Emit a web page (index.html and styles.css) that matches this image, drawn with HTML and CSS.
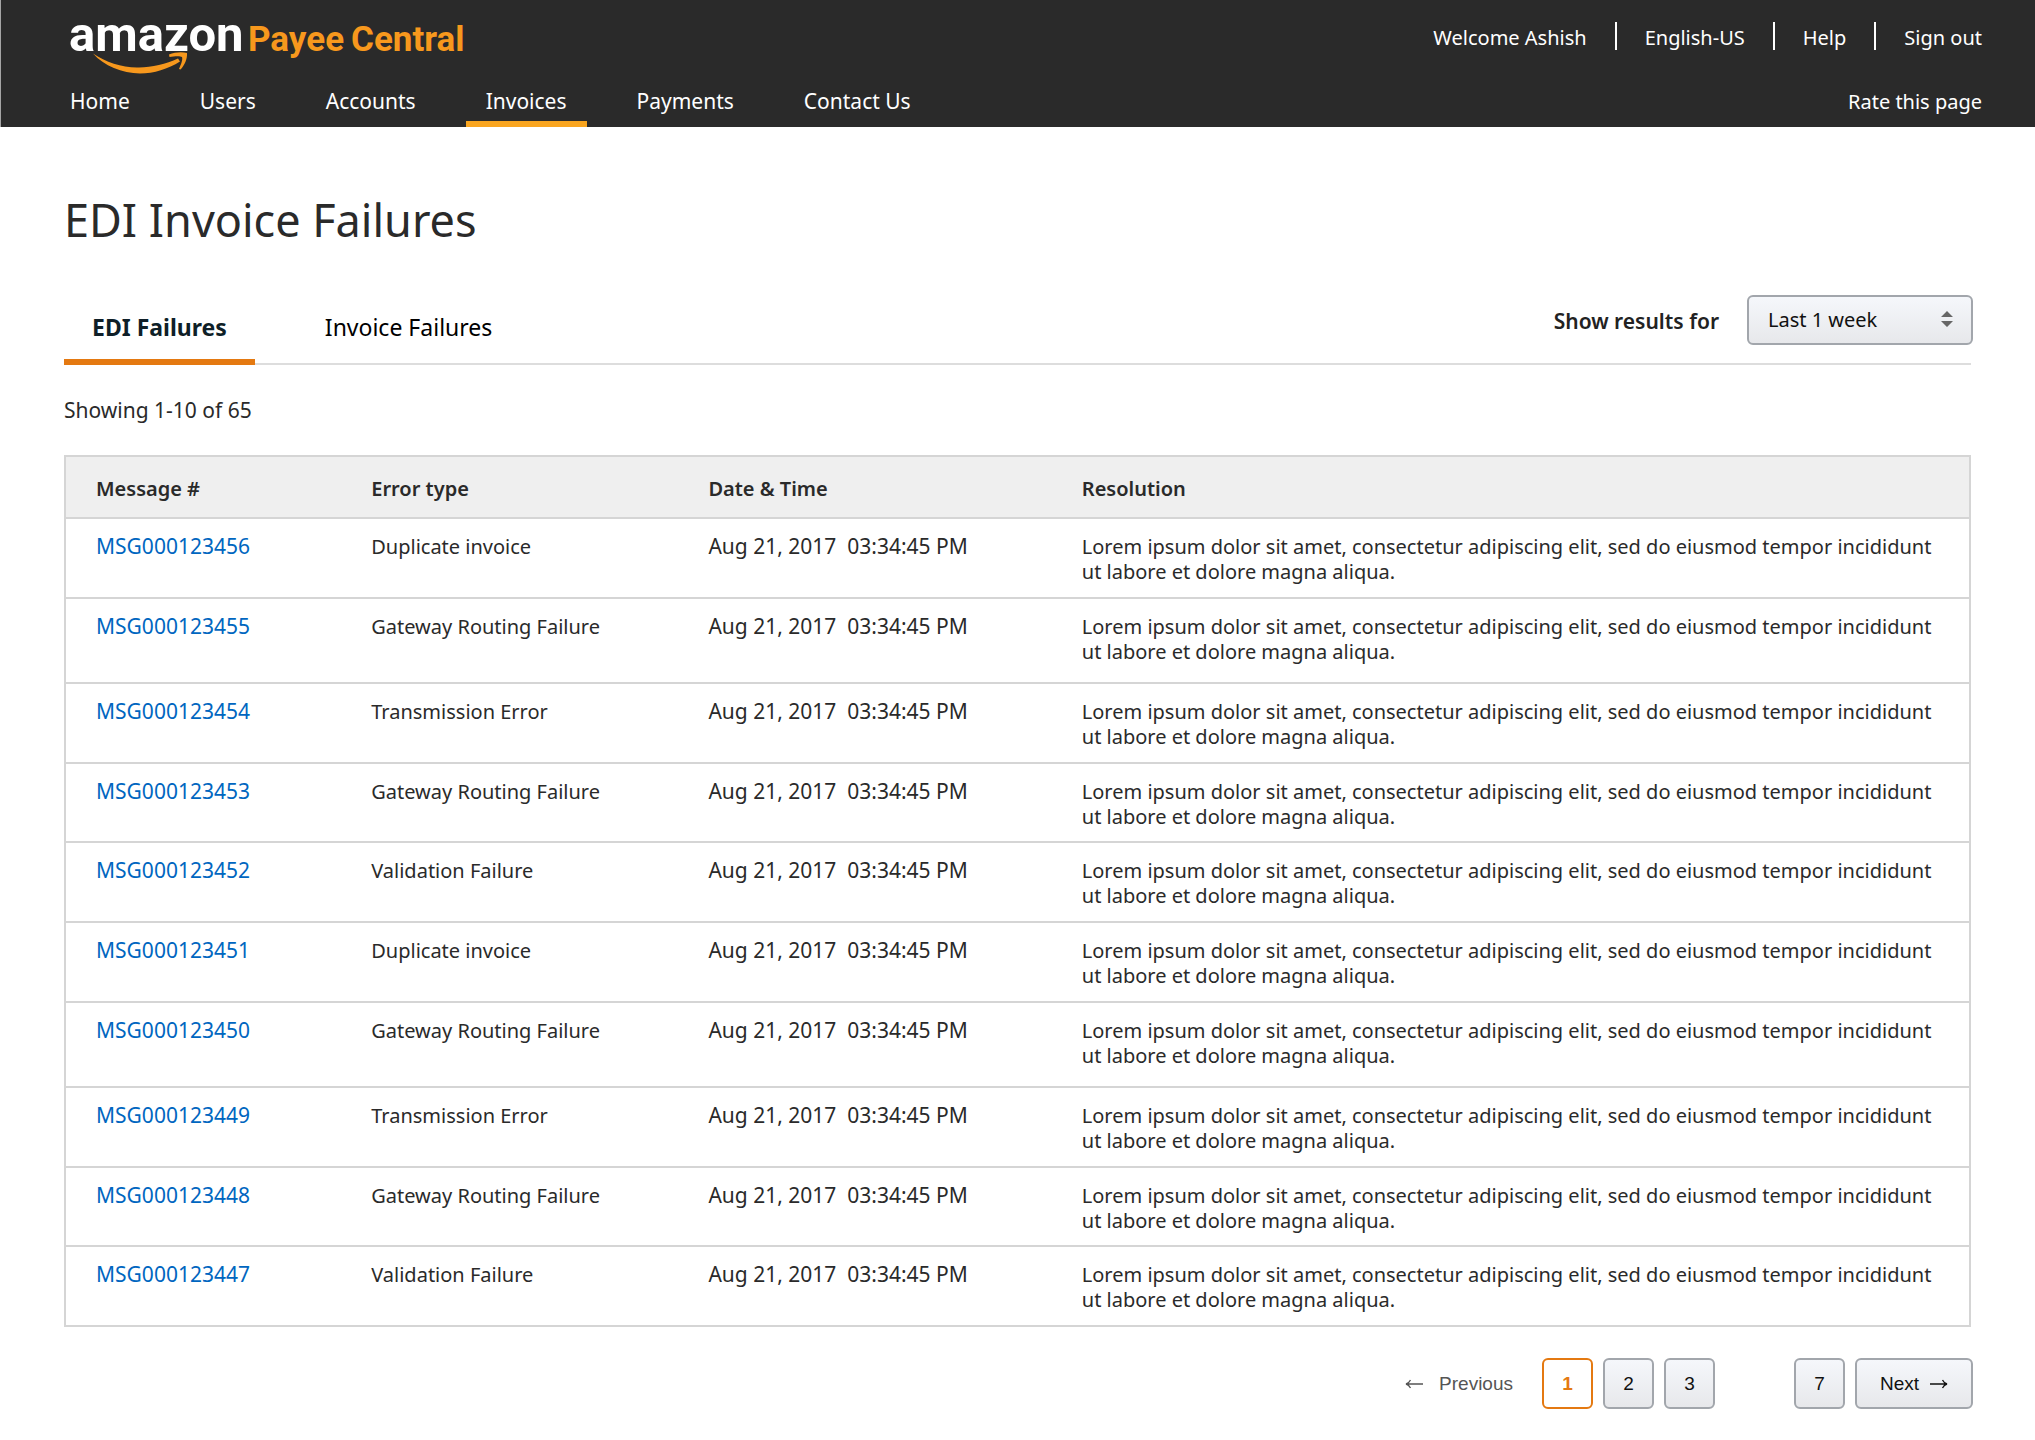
FILE: index.html
```html
<!DOCTYPE html>
<html lang="en">
<head>
<meta charset="utf-8">
<title>EDI Invoice Failures</title>
<link rel="stylesheet" href="styles.css">
</head>
<body>
<header class="header">
  <div class="header-row header-top">
    <a class="logo" href="#" aria-label="Amazon Payee Central">
      <svg width="404" height="60" viewBox="0 0 404 60">
        <text class="logo-amazon" x="-1" y="36">amazon</text>
        <text class="logo-payee" x="178" y="36">Payee</text>
        <text class="logo-payee" x="281" y="36">Central</text>
        <path fill="#f7981d" d="M23 38.500C36 47.500 53 53 69 52.500C82 52 96 49.500 108 43.500L110 46.500C98 54 84 58.500 70 58.500C52 58 34 51 23 38.500Z"/>
        <path fill="#f7981d" d="M99 39.500C105 37 112 36.500 117 38C117.500 44 114.500 50.500 110.500 54.500L109 54C111 49.500 113 44.500 112 42C109.500 40.500 103.500 41.500 99.500 42Z"/>
      </svg>
    </a>
    <ul class="account-links">
      <li>Welcome Ashish</li>
      <li><a href="#">English-US</a></li>
      <li><a href="#">Help</a></li>
      <li><a href="#">Sign out</a></li>
    </ul>
  </div>
  <div class="header-row">
    <nav class="main-nav">
      <a href="#">Home</a>
      <a href="#">Users</a>
      <a href="#">Accounts</a>
      <a href="#" class="current" aria-current="page">Invoices</a>
      <a href="#">Payments</a>
      <a href="#">Contact Us</a>
    </nav>
    <a class="rate" href="#">Rate this page</a>
  </div>
</header>
<main class="main">
  <h1>EDI Invoice Failures</h1>
  <div class="toolbar">
    <div class="tabs">
      <a href="#" class="tab tab-active">EDI Failures</a>
      <a href="#" class="tab">Invoice Failures</a>
    </div>
    <div class="filter">
      <label for="range">Show results for</label>
      <div class="select">
        <select id="range"><option>Last 1 week</option></select>
        <svg class="select-arrows" width="12" height="18" viewBox="0 0 12 18"><path fill="#666" d="M0 7L6 1L12 7ZM0 11H12L6 17Z"/></svg>
      </div>
    </div>
  </div>
  <p class="count">Showing 1-10 of 65</p>
  <table class="failures">
    <colgroup><col class="col-message"><col class="col-type"><col class="col-date"><col></colgroup>
    <thead>
      <tr><th>Message #</th><th>Error type</th><th>Date &amp; Time</th><th>Resolution</th></tr>
    </thead>
    <tbody>
      <tr><td class="id"><a href="#">MSG000123456</a></td><td>Duplicate invoice</td><td class="date">Aug 21, 2017&nbsp; 03:34:45 PM</td><td>Lorem ipsum dolor sit amet, consectetur adipiscing elit, sed do eiusmod tempor incididunt<br>ut labore et dolore magna aliqua.</td></tr>
      <tr class="tall"><td class="id"><a href="#">MSG000123455</a></td><td>Gateway Routing Failure</td><td class="date">Aug 21, 2017&nbsp; 03:34:45 PM</td><td>Lorem ipsum dolor sit amet, consectetur adipiscing elit, sed do eiusmod tempor incididunt<br>ut labore et dolore magna aliqua.</td></tr>
      <tr><td class="id"><a href="#">MSG000123454</a></td><td>Transmission Error</td><td class="date">Aug 21, 2017&nbsp; 03:34:45 PM</td><td>Lorem ipsum dolor sit amet, consectetur adipiscing elit, sed do eiusmod tempor incididunt<br>ut labore et dolore magna aliqua.</td></tr>
      <tr class="short"><td class="id"><a href="#">MSG000123453</a></td><td>Gateway Routing Failure</td><td class="date">Aug 21, 2017&nbsp; 03:34:45 PM</td><td>Lorem ipsum dolor sit amet, consectetur adipiscing elit, sed do eiusmod tempor incididunt<br>ut labore et dolore magna aliqua.</td></tr>
      <tr><td class="id"><a href="#">MSG000123452</a></td><td>Validation Failure</td><td class="date">Aug 21, 2017&nbsp; 03:34:45 PM</td><td>Lorem ipsum dolor sit amet, consectetur adipiscing elit, sed do eiusmod tempor incididunt<br>ut labore et dolore magna aliqua.</td></tr>
      <tr><td class="id"><a href="#">MSG000123451</a></td><td>Duplicate invoice</td><td class="date">Aug 21, 2017&nbsp; 03:34:45 PM</td><td>Lorem ipsum dolor sit amet, consectetur adipiscing elit, sed do eiusmod tempor incididunt<br>ut labore et dolore magna aliqua.</td></tr>
      <tr class="tall"><td class="id"><a href="#">MSG000123450</a></td><td>Gateway Routing Failure</td><td class="date">Aug 21, 2017&nbsp; 03:34:45 PM</td><td>Lorem ipsum dolor sit amet, consectetur adipiscing elit, sed do eiusmod tempor incididunt<br>ut labore et dolore magna aliqua.</td></tr>
      <tr><td class="id"><a href="#">MSG000123449</a></td><td>Transmission Error</td><td class="date">Aug 21, 2017&nbsp; 03:34:45 PM</td><td>Lorem ipsum dolor sit amet, consectetur adipiscing elit, sed do eiusmod tempor incididunt<br>ut labore et dolore magna aliqua.</td></tr>
      <tr class="short"><td class="id"><a href="#">MSG000123448</a></td><td>Gateway Routing Failure</td><td class="date">Aug 21, 2017&nbsp; 03:34:45 PM</td><td>Lorem ipsum dolor sit amet, consectetur adipiscing elit, sed do eiusmod tempor incididunt<br>ut labore et dolore magna aliqua.</td></tr>
      <tr><td class="id"><a href="#">MSG000123447</a></td><td>Validation Failure</td><td class="date">Aug 21, 2017&nbsp; 03:34:45 PM</td><td>Lorem ipsum dolor sit amet, consectetur adipiscing elit, sed do eiusmod tempor incididunt<br>ut labore et dolore magna aliqua.</td></tr>
    </tbody>
  </table>
  <nav class="pagination" aria-label="Pages">
    <button class="page-prev" type="button" disabled>
      <svg width="18" height="10" viewBox="0 0 18 10"><path fill="none" stroke="#555" stroke-width="1.300" d="M18 5H1.500M5.500 1C4.500 3 3 4.500 1 5C3 5.500 4.500 7 5.500 9"/></svg>
      Previous
    </button>
    <button class="page page-current" type="button" aria-current="page">1</button>
    <button class="page" type="button">2</button>
    <button class="page" type="button">3</button>
    <button class="page page-last" type="button">7</button>
    <button class="page page-next" type="button">
      Next
      <svg width="18" height="10" viewBox="0 0 18 10"><path fill="none" stroke="#111" stroke-width="1.300" d="M0 5H16.500M12.500 1C13.500 3 15 4.500 17 5C15 5.500 13.500 7 12.500 9"/></svg>
    </button>
  </nav>
</main>
</body>
</html>
```
FILE: styles.css
```css
* { box-sizing: border-box; }

body {
  margin: 0;
  background: #fff;
  color: #2a2a2a;
  font: 20px/25px "Noto Sans", sans-serif;
}

a { color: inherit; text-decoration: none; }

/* Header */
.header {
  background: #2a2a2a;
  color: #fff;
  padding: 0 53px 0 69px;
  border-left: 1px solid #a5a5a5;
}
.header-row { display: flex; justify-content: space-between; }
.header-top { height: 77px; padding-top: 15px; }
.logo { display: block; height: 60px; }
.logo svg { display: block; overflow: visible; }
.logo-amazon { font: bold 49px Roboto, "Liberation Sans", sans-serif; fill: #fff; }
.logo-payee { font: bold 35px Roboto, "Liberation Sans", sans-serif; fill: #f7981d; }

.account-links {
  display: flex;
  height: 28px;
  margin: 7px 0 0;
  padding: 0;
  list-style: none;
}
.account-links li { padding: 3px 0 0 28px; line-height: 25px; }
.account-links li + li { margin-left: 28px; border-left: 2px solid #fff; }

.main-nav { display: flex; gap: 30px; margin-left: -20px; font-size: 21px; }
.main-nav a {
  height: 50px;
  padding: 12px 20px 0;
  border-bottom: 6px solid transparent;
}
.main-nav .current { border-color: #f9a51f; }
.rate { padding-top: 12px; }

/* Page heading and tabs */
.main { padding: 63px 64px 32px; }
h1 { margin: 0; font-size: 45px; line-height: 60px; font-weight: 400; }

.toolbar {
  display: flex;
  justify-content: space-between;
  margin-top: 45px;
  border-bottom: 2px solid #ddd;
}
.tabs { display: flex; gap: 42px; margin-bottom: -2px; }
.tab {
  height: 70px;
  padding: 20px 28px 0;
  border-bottom: 6px solid transparent;
  color: #000;
  font-size: 23px;
}
.tab-active { border-color: #e47911; color: #0f1f28; font-weight: 700; }

.filter { display: flex; align-items: flex-start; gap: 28px; margin-right: -2px; }
.filter label { padding-top: 14px; font-size: 21px; font-weight: 600; color: #222; }
.select { position: relative; width: 226px; }
.select select {
  display: block;
  width: 100%;
  height: 50px;
  padding: 0 19px 2px;
  border: 2px solid #a2a6ac;
  border-radius: 6px;
  background: linear-gradient(#f5f7fb, #e7e8eb);
  color: #111;
  font: inherit;
  appearance: none;
}
.select-arrows { position: absolute; top: 15px; right: 20px; pointer-events: none; }

.count { margin: 33px 0 0; font-size: 21px; }

/* Failures table */
.failures {
  width: 100%;
  margin-top: 32px;
  border: 2px solid #d5d5d5;
  border-collapse: collapse;
  table-layout: fixed;
}
.col-message { width: 14.5%; }
.col-type { width: 17.7%; }
.col-date { width: 19.6%; }
.failures tr { height: 80px; border-bottom: 2px solid #d5d5d5; }
.failures thead tr { height: 62px; background: #efefef; }
.failures .tall { height: 85px; }
.failures .short { height: 79px; }
.failures th { padding: 3px 0 0 30px; text-align: left; font-weight: 600; }
.failures td { padding: 15px 0 0 30px; vertical-align: top; white-space: nowrap; }
.failures .id, .failures .date { font-size: 21px; }
.failures td a { color: #0066c0; }

/* Pagination */
.pagination { display: flex; justify-content: flex-end; gap: 10px; margin: 31px -2px 0 0; }
.pagination button { font: 19px/25px "Liberation Sans", sans-serif; }
.page {
  width: 51px;
  height: 51px;
  padding: 0;
  border: 2px solid #a2a6ac;
  border-radius: 6px;
  background: linear-gradient(#f5f7fb, #e7e8eb);
  color: #111;
}
.pagination .page-current { border-color: #e47911; background: #fff; color: #e47911; font-weight: 700; }
.page-last { margin-left: 69px; }
.page-next, .page-prev { display: flex; align-items: center; justify-content: center; }
.page-next { width: 118px; gap: 11px; }
.page-prev { gap: 16px; margin-right: 19px; padding: 0; border: 0; background: none; color: #555; }
```
